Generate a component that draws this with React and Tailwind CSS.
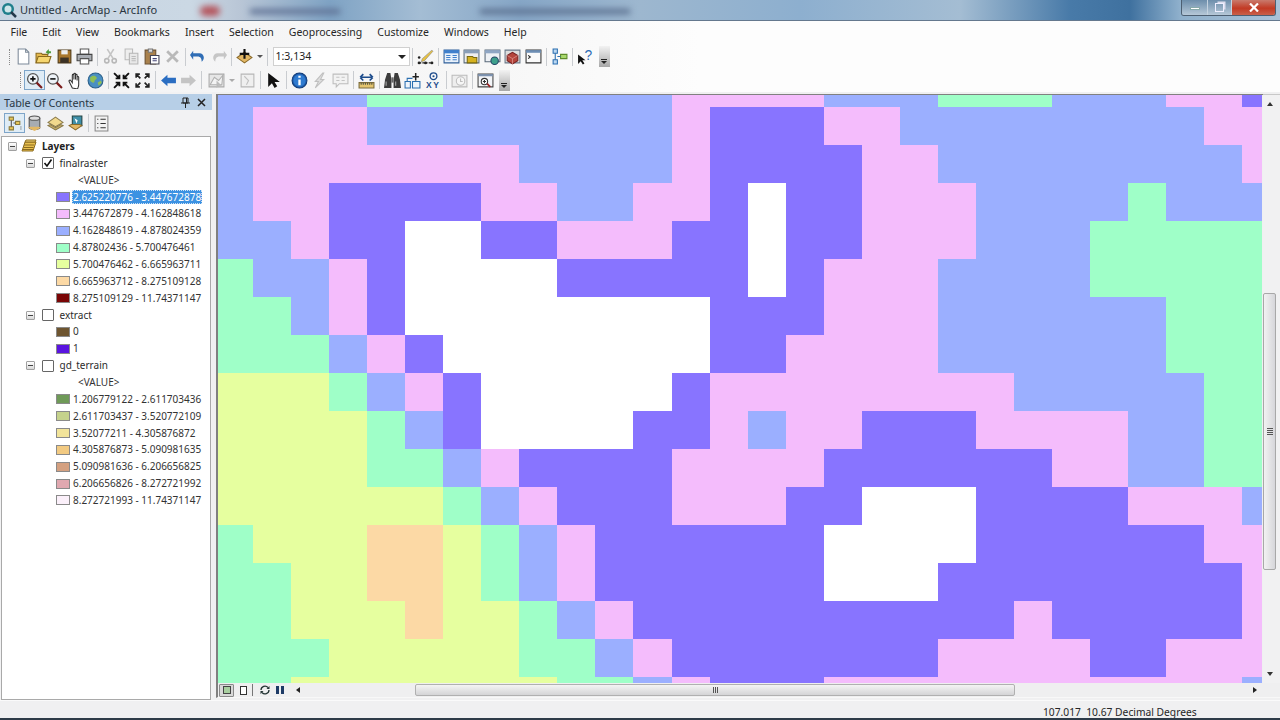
import React from 'react'

// raster cells, one letter per cell
const raster = [
  'BBBBGGBBBBBBPPPPBBBGGGBBBPPV',
  'BPPPBBBBBBBBPVVVPPBBBBBBBBPP',
  'BPPPPPPPBBBBPVVVVPPBBBBBBBBP',
  'BPPVVVVPPBBPPVWVVPPPBBBBGBBB',
  'BBPVVWWVVPPPVVWVVPPPBBBGGGGG',
  'GBBPVWWWWVVVVVWVPPPBBBBGGGGG',
  'GGBPVWWWWWWWWVVVPPPBBBBBBGGG',
  'GGGBPVWWWWWWWVVPPPPBBBBBBGGG',
  'YYYGBPVWWWWWVPPPPPPPPBBBBBGG',
  'YYYYGBVWWWWVVPBPPVVVPPPPBBGG',
  'YYYYGGBPVVVVPPPPVVVVVVPPBBGG',
  'YYYYYYGBPVVVPPPVVWWWVVVVPPPB',
  'GYYYOOYGBPVVVVVVWWWWVVVVVVPP',
  'GGYYOOYGBPVVVVVVWWWVVVVVVVVP',
  'GGYYYOYYGBPVVVVVVVVVVPVVVVVP',
  'GGGYYYYYGGBPVVVVVVVPPPPVVPPP',
  'GGYYYYYYYGGBPVVVPPPPPPPPPPPB',
]

const cellColor = {
  B: 'bg-[#9bafff]',
  P: 'bg-[#f4bcfc]',
  V: 'bg-[#8874ff]',
  G: 'bg-[#9fffc8]',
  Y: 'bg-[#e6ff9f]',
  O: 'bg-[#fcd9a5]',
  W: 'bg-white',
}

const menus = ['File', 'Edit', 'View', 'Bookmarks', 'Insert', 'Selection', 'Geoprocessing', 'Customize', 'Windows', 'Help']

const Svg = ({ children, size = 17 }) => (
  <svg width={size} height={size} viewBox="0 0 16 16" fill="none">{children}</svg>
)

const icons = {
  newDoc: <><path d="M3 1h7l3 3v11H3z" fill="#fff" stroke="#7d8a99" /><path d="M10 1v3h3" stroke="#7d8a99" /></>,
  open: <><path d="M1 14V5h5l1 1h5v2" fill="#e5b94e" stroke="#8a6a1e" /><path d="M1 14l2-6h12l-2 6z" fill="#f6d66f" stroke="#8a6a1e" /><path d="M10 4l3-3v2h2v2h-2v1z" fill="#4a9a3a" /></>,
  save: <><path d="M2 2h12v12H2z" fill="#a8762c" stroke="#4f3a18" /><path d="M5 2h6v4H5z" fill="#eee" /><path d="M4 9h8v5H4z" fill="#3c3226" /></>,
  print: <><path d="M4 1h8v5H4z" fill="#fff" stroke="#555" /><path d="M1 6h14v6H1z" fill="#a9adb3" stroke="#444" /><path d="M4 10h8v5H4z" fill="#fff" stroke="#555" /></>,
  cut: <><circle cx="4.500" cy="12" r="2" stroke="#b8b8b8" strokeWidth="1.500" /><circle cx="11.500" cy="12" r="2" stroke="#b8b8b8" strokeWidth="1.500" /><path d="M5.500 10L11 1M10.500 10L5 1" stroke="#c4c4c4" strokeWidth="1.500" /></>,
  copy: <><path d="M2 1h7v10H2z" fill="#eee" stroke="#bbb" /><path d="M6 5h8v10H6z" fill="#e8e8e8" stroke="#b5b5b5" /><path d="M8 8h4M8 10h4M8 12h4" stroke="#bbb" /></>,
  paste: <><path d="M2 2h10v13H2z" fill="#a9814c" stroke="#6b5030" /><path d="M5 1h4v3H5z" fill="#ddd" stroke="#777" /><path d="M7 7h8v8H7z" fill="#fff" stroke="#445" /><path d="M9 10h4M9 12h4" stroke="#447" /></>,
  del: <path d="M3 3l10 10M13 3L3 13" stroke="#b9b9b9" strokeWidth="2.600" />,
  undo: <path d="M3 5h6a4 4 0 0 1 4 4c0 2-1 3-2 4 0-3-1-5-4-5H3v3L0 6.500l3-4z" fill="#2f6db5" />,
  redo: <path d="M13 5H7a4 4 0 0 0-4 4c0 2 1 3 2 4 0-3 1-5 4-5h4v3l3-4.500-3-4z" fill="#c6c6c6" />,
  add: <><path d="M8 4l7 5-7 5-7-5z" fill="#e3b866" stroke="#8a6a2a" /><path d="M8 1v9M3.500 5.500h9" stroke="#111" strokeWidth="2" /></>,
  editor: <><path d="M2 14h12" stroke="#222" strokeDasharray="2 1" /><circle cx="2" cy="9" r="1.200" fill="#222" /><circle cx="2" cy="14" r="1.400" fill="#222" /><circle cx="8" cy="14" r="1.400" fill="#222" /><circle cx="14" cy="14" r="1.400" fill="#222" /><path d="M5 10l9-8 1 1-8 9-3 1z" fill="#e8c242" stroke="#777" strokeWidth=".5" /></>,
  table: <><path d="M1 2h14v12H1z" fill="#eaf2fb" stroke="#2f5f99" /><path d="M1 2h14v3H1z" fill="#3f7fcc" /><path d="M3 7h4M3 9h4M3 11h4M9 7h4M9 9h4M9 11h4" stroke="#3f7fcc" /></>,
  catalog: <><path d="M1 2h14v12H1z" fill="#eee" stroke="#5a6a7a" /><path d="M1 2h14v3H1z" fill="#8a9fb8" /><path d="M4 13V8h5l1 1h3v5H4z" fill="#d6b21f" stroke="#7a6a10" /></>,
  search: <><path d="M1 2h14v11H1z" fill="#eef1f5" stroke="#5a6a7a" /><path d="M1 2h14v3H1z" fill="#8fa6c4" /><circle cx="10" cy="12" r="3.500" fill="#3ea08c" stroke="#246" /></>,
  toolbox: <><path d="M1 2h14v12H1z" fill="#ddd" stroke="#6a7a8a" /><path d="M3 7l5-3 5 3v5l-5 3-5-3z" fill="#b5453c" stroke="#722" /><path d="M3 7l5 3 5-3M8 10v5" stroke="#e4a49e" strokeWidth=".6" /></>,
  python: <><path d="M1 2h14v12H1z" fill="#fbfbfb" stroke="#333" /><path d="M1 2h14v2.500H1z" fill="#6e8fb5" /><path d="M3 7l2 1.500L3 10" stroke="#222" /></>,
  model: <><path d="M2 1h4v4H2zM2 11h4v4H2z" fill="#bcd8f2" stroke="#2b6fb0" /><path d="M9 6h6v4H9z" fill="#a8d86c" stroke="#5d8a2a" /><path d="M4 5v6M6 8h3" stroke="#2b6fb0" /></>,
  whatsThis: <><path d="M1 6l0 9 2.500-2.500 2 3 1.500-1-2-3h3z" fill="#111" /><text x="7" y="11.500" fontSize="13" fill="#2d6cb5" fontFamily="Liberation Sans, sans-serif">?</text></>,
  zoomIn: <><circle cx="6.500" cy="6.500" r="5" fill="#eef3f8" stroke="#555" strokeWidth="1.200" /><path d="M4 6.500h5M6.500 4v5" stroke="#111" strokeWidth="1.500" /><path d="M10 10l5 5" stroke="#7b1c1c" strokeWidth="2" /></>,
  zoomOut: <><circle cx="6.500" cy="6.500" r="5" fill="#eef3f8" stroke="#555" strokeWidth="1.200" /><path d="M4 6.500h5" stroke="#111" strokeWidth="1.500" /><path d="M10 10l5 5" stroke="#7b1c1c" strokeWidth="2" /></>,
  hand: <path d="M5 15L2 9c-.5-1 1-1.800 1.500-1L5 10V3c0-1 1.500-1 1.500 0v4-5c0-1 1.500-1 1.500 0v5-4c0-1 1.500-1 1.500 0v5-3c0-1 1.500-1 1.500 0v7c0 2-1 3-1 4z" fill="#fff" stroke="#333" />,
  globe: <><circle cx="8" cy="8" r="7" fill="#4a8fc2" stroke="#2a5f8a" /><path d="M3 5c2-2 5-2 6 0s-2 2-2 4-3 1-4-1zM10 10l3-2 1 2-3 3z" fill="#8fbf55" /></>,
  zoomFixIn: <path d="M1 1l5 5M6 2.500V6H2.500M15 1l-5 5M10 2.500V6h3.500M1 15l5-5M6 13.500V10H2.500M15 15l-5-5M10 13.500V10h3.500" stroke="#111" strokeWidth="1.800" />,
  zoomFixOut: <path d="M6 6L2 2M2 5.500V2h3.500M10 6l4-4M14 5.500V2h-3.500M6 10l-4 4M2 10.500V14h3.500M10 10l4 4M14 10.500V14h-3.500" stroke="#222" strokeWidth="1.500" />,
  back: <path d="M1 8l6-5.500V5.500h8v5H7v3z" fill="#2b6ec2" />,
  forward: <path d="M15 8L9 2.500V5.500H1v5h8v3z" fill="#c4c4c4" />,
  selectF: <><path d="M1 2h14v12H1z" fill="#e6e6e6" stroke="#aaa" /><path d="M2 12l4-7 4 3 4-5-1 9z" fill="#f4f4f4" stroke="#b0b0b0" /><path d="M8 8v7l2-2 3 0z" fill="#bbb" /></>,
  clearF: <><path d="M2 2h12v12H2z" fill="#efefef" stroke="#b6b6b6" /><path d="M5 4l4 4-2 4" stroke="#c0c0c0" /></>,
  pointer: <path d="M3 1v13l3.500-3.500L9 15l2.500-1.500L9 9.500h5z" fill="#111" />,
  identify: <><circle cx="8" cy="8" r="7" fill="#1f5fb0" stroke="#0f3a78" /><circle cx="8" cy="8" r="5.600" fill="#2f7bd0" /><path d="M8 3.500v2M8 7v5.500" stroke="#fff" strokeWidth="2.200" /></>,
  flash: <path d="M11 1L4 9h3l-3 6 8-8H9l3-6z" fill="#dedede" stroke="#c0c0c0" />,
  html: <><path d="M1 2h14v9H7l-3 3v-3H1z" fill="#f2f2f2" stroke="#bdbdbd" /><path d="M4 5h3M4 8h3M9 5h3M9 8h3" stroke="#c3c3c3" /></>,
  measure: <><path d="M1 10h14v5H1z" fill="#e3c46e" stroke="#7a6a3a" /><path d="M3 10v2M5 10v2M7 10v2M9 10v2M11 10v2M13 10v2" stroke="#554" /><path d="M2 5h12M2 5l3-3M2 5l3 3M14 5l-3-3M14 5l-3 3" stroke="#1d4c8c" strokeWidth="1.500" /></>,
  find: <><path d="M0 15l1-8 2-6h3l1 6v8z" fill="#3c3c3c" /><path d="M16 15l-1-8-2-6h-3L9 7v8z" fill="#3c3c3c" /><path d="M7 5h2v5H7z" fill="#666" /><path d="M2 9v4M11 9v4" stroke="#aaa" /></>,
  route: <><path d="M1 9h5v6H1zM8 9h7v6H8z" fill="#eef4fb" stroke="#2b6fb0" /><path d="M11 1v7M8 4.500h6" stroke="#222" strokeWidth="1.400" /><path d="M3 9V6h5" stroke="#2b6fb0" /></>,
  xy: <><circle cx="8" cy="4" r="3.200" stroke="#1d4c8c" strokeWidth="1.200" /><circle cx="8" cy="4" r="1" fill="#1d4c8c" /><text x="1" y="15" fontSize="8" fontWeight="700" letterSpacing="1.500" fill="#1d4c8c" fontFamily="Liberation Sans, sans-serif">XY</text></>,
  time: <><path d="M1 3h14v11H1z" fill="#eee" stroke="#bbb" /><circle cx="9" cy="8.500" r="4" fill="#f6f6f6" stroke="#bdbdbd" /><path d="M9 6v3h2" stroke="#bdbdbd" /></>,
  viewer: <><path d="M1 2h14v12H1z" fill="#f3f5f8" stroke="#444" /><path d="M1 2h14v2H1z" fill="#7d93b0" /><circle cx="7" cy="9" r="3" fill="#fff" stroke="#333" /><path d="M5.500 9h3M7 7.500v3" stroke="#333" /><path d="M9.500 11l3 3" stroke="#922" strokeWidth="1.600" /></>,
  byOrder: <><path d="M3 2h4v3H3zM3 11h4v3H3zM9 6h4v3H9z" fill="#e8c75a" stroke="#8a7a3a" /><path d="M5 5v6M7 7.500h2" stroke="#555" /><path d="M14 11v.5M14 13v.5" stroke="#333" strokeWidth="1.500" /></>,
  bySource: <><path d="M3 3v9c0 2 10 2 10 0V3z" fill="#a7acb3" stroke="#555" /><ellipse cx="8" cy="3" rx="5" ry="2" fill="#ddd" stroke="#555" /><path d="M2 12l6 3 6-3-2-1H4z" fill="#e3b866" /></>,
  byVisible: <><path d="M8 2l7 5-7 4-7-4z" fill="#f2d98d" stroke="#8a7a4a" /><path d="M1 10l7 4 7-4-2-1-5 3-5-3z" fill="#c9b06a" stroke="#8a7a4a" /></>,
  bySelect: <><path d="M5 1h9v9H5z" fill="#3f8fa8" stroke="#244" /><path d="M7 3l3 2-1 3z" fill="#fff" /><path d="M2 10l6 4 6-4-2-1H4z" fill="#e3b866" stroke="#8a6a2a" /></>,
  options: <><path d="M2 1h12v14H2z" fill="#f2f2f2" stroke="#888" /><path d="M4 4h1M4 8h1M4 12h1M7 4h5M7 8h5M7 12h5" stroke="#333" /></>,
  layers: <><path d="M4 4L1 13h11l3-9z" fill="#e9c04e" stroke="#8a6a1e" /><path d="M3 7h10M2.500 9.500h10M2 11.500h10" stroke="#8a6a1e" /><path d="M5 2h10l-1 2H4z" fill="#f3d77a" stroke="#8a6a1e" /></>,
}

const Slot = ({ name, active }) => (
  <span className={`w-[20.500px] h-[20px] shrink-0 flex items-center justify-center ${active ? 'border border-[#7ea5c9] bg-[#dfecf6]' : ''}`}>
    <Svg>{icons[name]}</Svg>
  </span>
)

const Sep = () => (
  <span className="w-[5.500px] h-[18px] shrink-0 flex justify-center">
    <span className="w-px h-full bg-[#c9ccd0]"></span>
  </span>
)

const Arrow = ({ className = 'border-t-[#555]' }) => (
  <span className="w-[10px] shrink-0 flex justify-center">
    <span className={`w-0 h-0 border-x-[3px] border-x-transparent border-t-[3px] ${className}`}></span>
  </span>
)

const Grip = () => (
  <span className="w-px h-[16px] shrink-0 border-l border-dotted border-[#8a8a8a]"></span>
)

const Overflow = () => (
  <span className="w-[11px] h-[21px] ml-[3px] shrink-0 flex flex-col items-center justify-end pb-[3px] gap-[1px] bg-[linear-gradient(to_bottom,#f2f2f2,#a8a8a8)]">
    <span className="w-[6px] h-px bg-[#222]"></span>
    <span className="w-0 h-0 border-x-[3px] border-x-transparent border-t-[3px] border-t-[#222]"></span>
  </span>
)

function TitleBar() {
  return (
    <div className="relative h-[21px] shrink-0 flex items-center border-b border-[#64788e] overflow-hidden bg-[linear-gradient(to_right,#c6d4e2,#cbd8e4_190px,#b9c6d6_240px,#7fa3c4_330px,#a4bdd4_420px,#86a6c6_520px,#9db7cf_640px,#8dafcf_800px,#a4bdd3_960px,#487aa8_1070px,#3f719f_1130px,#8fb0cc_1180px,#aac2d8_1280px)]">
      <span className="absolute left-[200px] top-[6px] w-[20px] h-[10px] rounded-full bg-[#b4545c] blur-[3px]"></span>
      <span className="absolute left-[250px] top-[9px] w-[90px] h-[5px] bg-[#5d6f92] blur-[3px]"></span>
      <span className="absolute left-[480px] top-[9px] w-[150px] h-[5px] bg-[#5a6f8e] blur-[3px]"></span>
      <span className="ml-[1px] shrink-0">
        <svg width="16" height="16" viewBox="0 0 16 16"><circle cx="7" cy="7" r="6" fill="#1f7f8c" /><circle cx="7" cy="7" r="3.500" fill="#cfe6ea" /><path d="M10 10l5 5" stroke="#24384a" strokeWidth="2.500" /></svg>
      </span>
      <span className="ml-[3px] text-[11px] text-[#2a3540]">Untitled - ArcMap - ArcInfo</span>
      <div className="absolute right-[4px] top-0 h-[16px] flex border border-t-0 border-[#4d5f72] rounded-b-[3px] overflow-hidden">
        <span className="w-[26px] flex items-center justify-center border-r border-[#c4d2df] bg-[linear-gradient(to_bottom,#6d8eab,#b6c8d8)]">
          <span className="w-[10px] h-[3px] mt-[2px] bg-white border border-[#8aa]"></span>
        </span>
        <span className="w-[24px] flex items-center justify-center border-r border-[#c4d2df] bg-[linear-gradient(to_bottom,#6d8eab,#b6c8d8)]">
          <span className="relative w-[9px] h-[9px] border-[1.500px] border-[#eef] shadow-[2px_-2px_0_-0.500px_#dde]"></span>
        </span>
        <span className="w-[43px] flex items-center justify-center bg-[linear-gradient(to_bottom,#c97a6c,#c23a24_55%,#c9604a)]">
          <svg width="10" height="9" viewBox="0 0 10 9"><path d="M1 .5l8 8M9 .5l-8 8" stroke="#fff" strokeWidth="2.200" /></svg>
        </span>
      </div>
    </div>
  )
}

function Toolbars() {
  return (
    <div className="shrink-0 bg-[linear-gradient(to_right,#f3f3f4,#f7f7f7_500px,#fdfdfd_700px)]">
      <div className="h-[24px] pl-[3px] flex items-center text-[10.500px] text-[#262626]">
        {menus.map(m => <span key={m} className="px-[7.500px]">{m}</span>)}
      </div>

      <div className="h-[23px] pl-[9px] flex items-center">
        <Grip />
        <span className="w-[3px] shrink-0"></span>
        <Slot name="newDoc" /><Slot name="open" /><Slot name="save" /><Slot name="print" />
        <Sep />
        <Slot name="cut" /><Slot name="copy" /><Slot name="paste" /><Slot name="del" />
        <Sep />
        <Slot name="undo" /><Slot name="redo" />
        <Sep />
        <Slot name="add" /><Arrow />
        <Sep />
        <div className="w-[137px] h-[19px] ml-[2px] flex items-center justify-between pl-[2px] pr-[3px] bg-white border border-[#d0d0d0] text-[10.500px] text-[#222]">
          1:3,134
          <span className="w-0 h-0 border-x-[4px] border-x-transparent border-t-[4px] border-t-[#222]"></span>
        </div>
        <Sep />
        <Slot name="editor" />
        <Sep />
        <Slot name="table" /><Slot name="catalog" /><Slot name="search" /><Slot name="toolbox" /><Slot name="python" />
        <Sep />
        <Slot name="model" />
        <Sep />
        <Slot name="whatsThis" />
        <Overflow />
      </div>

      <div className="h-[24px] pl-[20px] flex items-center">
        <Grip />
        <span className="w-[3px] shrink-0"></span>
        <Slot name="zoomIn" active /><Slot name="zoomOut" /><Slot name="hand" /><Slot name="globe" />
        <Sep />
        <Slot name="zoomFixIn" /><Slot name="zoomFixOut" />
        <Sep />
        <Slot name="back" /><Slot name="forward" />
        <Sep />
        <span className="w-[2px] shrink-0"></span>
        <Slot name="selectF" /><Arrow className="border-t-[#aaa]" /><Slot name="clearF" />
        <Sep />
        <Slot name="pointer" />
        <Sep />
        <Slot name="identify" /><Slot name="flash" /><Slot name="html" />
        <Sep />
        <Slot name="measure" />
        <Sep />
        <Slot name="find" /><Slot name="route" /><Slot name="xy" />
        <Sep />
        <Slot name="time" />
        <Sep />
        <Slot name="viewer" />
        <Overflow />
      </div>
    </div>
  )
}

const Expander = () => (
  <span className="w-[9px] h-[9px] shrink-0 flex items-center justify-center border border-[#a0a0a0] rounded-[1px] bg-[linear-gradient(to_bottom,#fff,#d8d8d8)]">
    <span className="w-[5px] h-px bg-[#444]"></span>
  </span>
)

const LayerRow = ({ name, checked }) => (
  <div className="h-[16.870px] pl-[24px] flex items-center">
    <Expander />
    <span className="w-[12px] h-[12px] ml-[7px] shrink-0 flex items-center justify-center border border-[#666] bg-white rounded-[1px]">
      {checked && (
        <svg width="10" height="10" viewBox="0 0 10 10"><path d="M1.500 5l2.500 3 4.500-6.500" stroke="#111" strokeWidth="1.600" fill="none" /></svg>
      )}
    </span>
    <span className="ml-[5.500px] text-[#2b2b2b]">{name}</span>
  </div>
)

const ValueRow = () => (
  <div className="h-[16.870px] pl-[76px] flex items-center text-[#333]">&lt;VALUE&gt;</div>
)

const LegendRow = ({ swatch, label, selected }) => (
  <div className="h-[16.870px] pl-[54px] flex items-center">
    <span className={`w-[14px] h-[10px] shrink-0 border border-[#8a8a8a] ${swatch}`}></span>
    {selected ? (
      <span className="ml-[2px] w-[130px] h-[14px] flex items-center whitespace-nowrap bg-[#3c92e2] border border-dotted border-[#cfe2f5] text-white">{label}</span>
    ) : (
      <span className="ml-[3px] whitespace-nowrap text-[#333]">{label}</span>
    )}
  </div>
)

function Toc() {
  return (
    <aside className="w-[212px] pt-[2px] flex flex-col bg-[#f2f2f3]">
      <div className="h-[16px] shrink-0 px-[4px] flex items-center justify-between bg-[#b7cfe7] text-[10.800px] text-[#2a3744]">
        <span className="pt-[2px]">Table Of Contents</span>
        <span className="flex items-center gap-[7px] pr-[2px]">
          <svg width="9" height="11" viewBox="0 0 9 11"><path d="M2 1h5v5H2zM0 6h9M4.500 6v5M5.500 1v5" stroke="#222" fill="none" /></svg>
          <svg width="9" height="9" viewBox="0 0 9 9"><path d="M1 1l7 7M8 1L1 8" stroke="#222" strokeWidth="1.500" /></svg>
        </span>
      </div>
      <div className="h-[26px] shrink-0 pl-[4px] flex items-center">
        <Slot name="byOrder" active /><Slot name="bySource" /><Slot name="byVisible" /><Slot name="bySelect" />
        <Sep />
        <Slot name="options" />
      </div>
      <div className="flex-1 ml-px mr-px pt-px border border-[#a9a9a9] bg-white text-[10px]">
        <div className="h-[16.870px] pl-[6px] flex items-center">
          <Expander />
          <span className="ml-[4px]"><Svg size={16}>{icons.layers}</Svg></span>
          <span className="ml-[5px] font-bold text-[#222]">Layers</span>
        </div>
        <LayerRow name="finalraster" checked />
        <ValueRow />
        <LegendRow swatch="bg-[#8874ff]" label="2.625220776 - 3.447672878" selected />
        <LegendRow swatch="bg-[#f4bcfc]" label="3.447672879 - 4.162848618" />
        <LegendRow swatch="bg-[#9bafff]" label="4.162848619 - 4.878024359" />
        <LegendRow swatch="bg-[#9fffc8]" label="4.87802436 - 5.700476461" />
        <LegendRow swatch="bg-[#e6ff9f]" label="5.700476462 - 6.665963711" />
        <LegendRow swatch="bg-[#fcd9a5]" label="6.665963712 - 8.275109128" />
        <LegendRow swatch="bg-[#7a0505]" label="8.275109129 - 11.74371147" />
        <LayerRow name="extract" />
        <LegendRow swatch="bg-[#6e5530]" label="0" />
        <LegendRow swatch="bg-[#5a14e0]" label="1" />
        <LayerRow name="gd_terrain" />
        <ValueRow />
        <LegendRow swatch="bg-[#6f9a58]" label="1.206779122 - 2.611703436" />
        <LegendRow swatch="bg-[#c5d28c]" label="2.611703437 - 3.520772109" />
        <LegendRow swatch="bg-[#f2e49a]" label="3.52077211 - 4.305876872" />
        <LegendRow swatch="bg-[#f2ca82]" label="4.305876873 - 5.090981635" />
        <LegendRow swatch="bg-[#d4a080]" label="5.090981636 - 6.206656825" />
        <LegendRow swatch="bg-[#e0a8b0]" label="6.206656826 - 8.272721992" />
        <LegendRow swatch="bg-[#fbf0fa]" label="8.272721993 - 11.74371147" />
      </div>
    </aside>
  )
}

function MapView() {
  return (
    <div className="w-[1047px] border-t border-[#808080] border-l-2 border-l-[#808080] overflow-hidden">
      <div className="grid grid-cols-[35px_repeat(26,38.050px)_20px] grid-rows-[12px_repeat(15,38px)_6px] h-[588px]">
        {raster.flatMap((row, y) =>
          row.split('').map((c, x) => <div key={`${x}-${y}`} className={cellColor[c]}></div>)
        )}
      </div>
    </div>
  )
}

function VScroll() {
  return (
    <div className="flex-1 flex flex-col bg-[#f1f1f2]">
      <div className="h-[18px] flex items-center justify-center border-t border-[#c8c8c8]">
        <span className="w-0 h-0 mr-[3px] border-x-[3px] border-x-transparent border-b-[4px] border-b-[#333]"></span>
      </div>
      <div className="h-[181px]"></div>
      <div className="h-[277px] w-[13px] flex flex-col items-center justify-center gap-px border border-[#a8a8a8] rounded-[2px] bg-[linear-gradient(to_right,#f2f2f2,#d6d6da)]">
        <span className="w-[6px] h-px bg-[#555]"></span>
        <span className="w-[6px] h-px bg-[#555]"></span>
        <span className="w-[6px] h-px bg-[#555]"></span>
        <span className="w-[6px] h-px bg-[#555]"></span>
      </div>
      <div className="flex-1"></div>
      <div className="h-[18px] flex items-center justify-center">
        <span className="w-0 h-0 mr-[3px] border-x-[3px] border-x-transparent border-t-[4px] border-t-[#333]"></span>
      </div>
    </div>
  )
}

function HScroll() {
  return (
    <div className="h-[15px] flex items-center border-l-2 border-[#808080] border-b border-b-[#f8f8f8] bg-[#efeff0]">
      <span className="w-[15px] h-[13px] ml-[1px] flex items-center justify-center border border-[#8a8a8a] rounded-[1px] bg-[#d8d8d8]">
        <span className="w-[8px] h-[8px] border border-[#444] bg-[#a8cfa0]"></span>
      </span>
      <span className="w-[18px] flex justify-center">
        <span className="w-[7px] h-[9px] border border-[#333] bg-white"></span>
      </span>
      <span className="w-px h-[12px] bg-[#777]"></span>
      <span className="w-[23px] flex justify-center">
        <svg width="10" height="10" viewBox="0 0 10 10"><path d="M1 5a4 4 0 0 1 7-2.500M9 5a4 4 0 0 1-7 2.500" stroke="#233" strokeWidth="1.300" fill="none" /><path d="M9.500 1v3h-3M.500 9V6h3" fill="#233" /></svg>
      </span>
      <span className="w-[8px] h-[8px] flex justify-between">
        <span className="w-[3px] h-full bg-[#1d3a66]"></span>
        <span className="w-[3px] h-full bg-[#1d3a66]"></span>
      </span>
      <span className="ml-[12px] w-0 h-0 border-y-[3px] border-y-transparent border-r-[4px] border-r-[#222]"></span>
      <span className="w-[115px]"></span>
      <div className="w-[600px] h-[12px] flex items-center justify-center gap-px border border-[#b0b0b0] rounded-[2px] bg-[linear-gradient(to_bottom,#f4f4f4,#d4d4d6)]">
        <span className="w-px h-[6px] bg-[#555]"></span>
        <span className="w-px h-[6px] bg-[#555]"></span>
        <span className="w-px h-[6px] bg-[#555]"></span>
      </div>
      <span className="ml-[238px] w-0 h-0 border-y-[3px] border-y-transparent border-l-[4px] border-l-[#222]"></span>
    </div>
  )
}

export default function App() {
  return (
    <div className="w-[1280px] h-[720px] flex flex-col overflow-hidden bg-[#f0f0f1] font-['Noto_Sans',sans-serif]">
      <TitleBar />
      <Toolbars />
      <div className="h-[608px] shrink-0 flex">
        <Toc />
        <div className="w-[1064px] ml-[4px] pt-[2px] flex flex-col">
          <div className="h-[589px] flex">
            <MapView />
            <VScroll />
          </div>
          <HScroll />
        </div>
      </div>
      <div className="h-[18px] shrink-0 pl-[1043px] pt-[6px] flex items-center text-[10.250px] text-[#262626] whitespace-pre border-t border-[#fafafa]">
        107.017  10.67 Decimal Degrees
      </div>
      <div className="flex-1 bg-[#2e3b48]"></div>
    </div>
  )
}
